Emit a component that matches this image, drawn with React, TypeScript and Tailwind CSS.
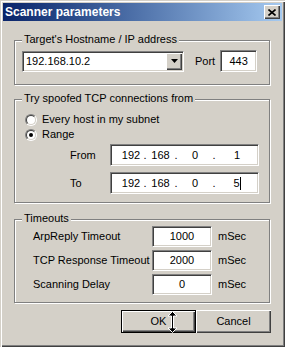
const sunken =
  "border border-t-[#808080] border-l-[#808080] border-r-white border-b-white shadow-[inset_1px_1px_0_#404040,inset_-1px_-1px_0_#d4d0c8] bg-white";
const raised =
  "shadow-[inset_1px_1px_0_#fff,inset_-1px_-1px_0_#404040,inset_-2px_-2px_0_#808080] bg-[#d4d0c8]";

function Group({ title, className, children }: { title: string; className: string; children: React.ReactNode }) {
  return (
    <div className={`relative border border-[#808080] shadow-[inset_1px_1px_0_#fff,1px_1px_0_#fff] ${className}`}>
      <span className="absolute left-[7px] -top-[8px] bg-[#d4d0c8] px-[2px] leading-[13px]">{title}</span>
      {children}
    </div>
  );
}

function Radio({ checked, label }: { checked?: boolean; label: string }) {
  return (
    <div className="flex h-[15px] items-center gap-[5px]">
      <div className="w-[12px] h-[12px] rounded-full border border-t-[#808080] border-l-[#808080] border-r-white border-b-white">
        <div className="flex h-full w-full items-center justify-center rounded-full border border-t-[#404040] border-l-[#404040] border-r-[#d4d0c8] border-b-[#d4d0c8] bg-white">
          {checked && <div className="w-[4px] h-[4px] rounded-full bg-black" />}
        </div>
      </div>
      <span className="leading-[13px]">{label}</span>
    </div>
  );
}

function IpField({ parts, caret }: { parts: string[]; caret?: boolean }) {
  return (
    <div className={`${sunken} flex h-[22px] w-[149px] items-center pl-[8px]`}>
      <span className="w-[24px] text-center">{parts[0]}</span>
      <span className="w-[4px] text-center">.</span>
      <span className="w-[27px] text-center">{parts[1]}</span>
      <span className="w-[4px] text-center">.</span>
      <span className="w-[34px] text-center">{parts[2]}</span>
      <span className="w-[4px] text-center">.</span>
      <span className="w-[42px] text-center">
        {parts[3]}
        {caret && <span className="inline-block h-[13px] w-px bg-black align-middle" />}
      </span>
    </div>
  );
}

function TimeoutRow({ label, value }: { label: string; value: string }) {
  return (
    <div className="flex h-[21px] items-center">
      <span className="w-[119px]">{label}</span>
      <div className={`${sunken} flex h-[21px] w-[60px] items-center justify-center`}>{value}</div>
      <span className="ml-[6px]">mSec</span>
    </div>
  );
}

export default function App() {
  return (
    <div
      className="w-[285px] h-[347px] bg-[#d4d0c8] p-[3px] text-[11px] text-black shadow-[inset_1px_1px_0_#d4d0c8,inset_2px_2px_0_#fff,inset_-1px_-1px_0_#404040,inset_-2px_-2px_0_#808080]"
      style={{ fontFamily: '"Liberation Sans", Arial, sans-serif' }}
    >
      {/* Title bar */}
      <div className="flex h-[18px] items-center justify-between bg-gradient-to-r from-[#0a246a] to-[#a6caf0] pl-[2px] pr-[2px]">
        <span className="text-[12px] font-bold text-white leading-[14px]">Scanner parameters</span>
        <div className={`${raised} flex h-[14px] w-[16px] items-center justify-center`}>
          <svg width="8" height="7" viewBox="0 0 8 7">
            <path d="M0.5 0.5 L7.5 6.5 M7.5 0.5 L0.5 6.5" stroke="#000" strokeWidth="1.6" />
          </svg>
        </div>
      </div>

      <div className="flex flex-col pl-[11px] pr-[12px]">
        {/* Target */}
        <Group title="Target's Hostname / IP address" className="mt-[19px] h-[45px]">
          <div className="flex items-center pl-[7px] pt-[9px]">
            <div className={`${sunken} flex h-[21px] w-[162px] items-center justify-between pl-[3px] pr-px`}>
              <span>192.168.10.2</span>
              <div className="flex h-[17px] w-[16px] items-center justify-center bg-[#d4d0c8] shadow-[inset_1px_1px_0_#fff,inset_-1px_-1px_0_#404040,inset_-2px_-2px_0_#808080]">
                <svg width="7" height="4" viewBox="0 0 7 4">
                  <path d="M0 0 H7 L3.5 4 Z" fill="#000" />
                </svg>
              </div>
            </div>
            <span className="ml-[11px]">Port</span>
            <div className={`${sunken} ml-[5px] flex h-[22px] w-[37px] items-center justify-center`}>443</div>
          </div>
        </Group>

        {/* Spoofed */}
        <Group title="Try spoofed TCP connections from" className="mt-[14px] h-[104px]">
          <div className="flex flex-col pl-[10px] pt-[12px]">
            <Radio label="Every host in my subnet" />
            <Radio checked label="Range" />
            <div className="mt-[2px] flex items-center pl-[45px]">
              <span className="w-[40px]">From</span>
              <IpField parts={["192", "168", "0", "1"]} />
            </div>
            <div className="mt-[6px] flex items-center pl-[45px]">
              <span className="w-[40px]">To</span>
              <IpField parts={["192", "168", "0", "5"]} caret />
            </div>
          </div>
        </Group>

        {/* Timeouts */}
        <Group title="Timeouts" className="mt-[16px] h-[84px]">
          <div className="flex flex-col gap-[3px] pl-[18px] pt-[6px]">
            <TimeoutRow label="ArpReply Timeout" value="1000" />
            <TimeoutRow label="TCP Response Timeout" value="2000" />
            <TimeoutRow label="Scanning Delay" value="0" />
          </div>
        </Group>

        {/* Buttons */}
        <div className="-mr-[1px] mt-[7px] flex justify-end">
          <div className="relative h-[23px] w-[75px] border border-black">
            <div className={`${raised} flex h-full w-full items-center justify-center`}>OK</div>
            <svg className="absolute left-[45px] top-0" width="11" height="22" viewBox="0 0 11 22">
              <path
                d="M5.5 0.5 L10 5 L6.5 5 L6.5 17 L10 17 L5.5 21.5 L1 17 L4.5 17 L4.5 5 L1 5 Z"
                fill="#000"
                stroke="#fff"
                strokeWidth="1"
              />
            </svg>
          </div>
          <div className={`${raised} flex h-[23px] w-[75px] items-center justify-center`}>Cancel</div>
        </div>
      </div>
    </div>
  );
}
